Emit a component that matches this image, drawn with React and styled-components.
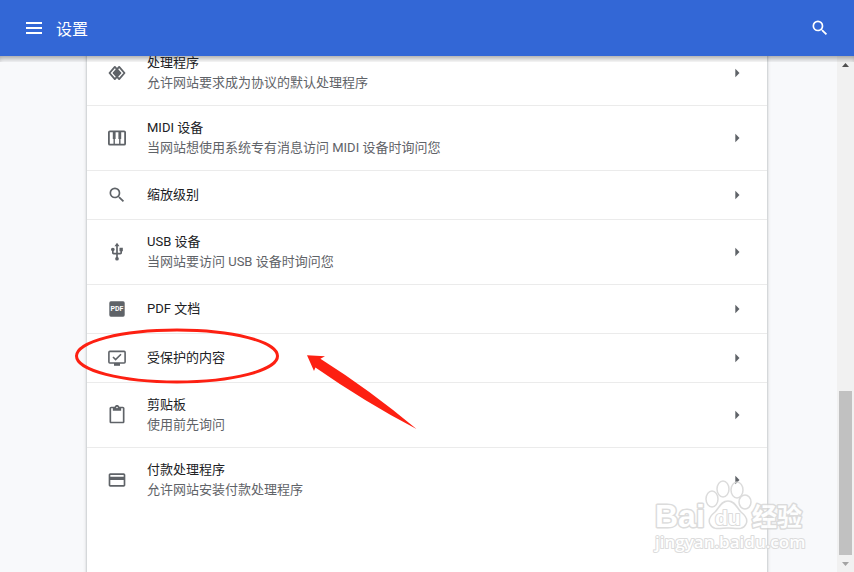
import React from 'react';
import styled, { createGlobalStyle } from 'styled-components';
import { MdSearch, MdUsb, MdContentPaste, MdCreditCard } from 'react-icons/md';

const HandlerIcon = () => (
  <svg width="20" height="20" viewBox="0 0 24 24" fill="none" stroke="currentColor" strokeWidth="2.2" strokeLinejoin="round" aria-hidden="true">
    <path d="M9.4 4.7L3 12l6.4 7.3 6.8-7.3z" />
    <path d="M14.6 4.7L7.8 12l6.8 7.3L21 12z" />
    <path d="M12 8.2L8.6 12l3.4 3.8 3.4-3.8z" fill="currentColor" />
  </svg>
);

const MidiIcon = () => (
  <svg width="20" height="20" viewBox="0 0 20 20" fill="none" stroke="currentColor" aria-hidden="true">
    <rect x="1.9" y="3.3" width="16.2" height="13.4" rx="1" strokeWidth="1.8" />
    <path d="M7.2 10v6M12.8 10v6" strokeWidth="1.4" />
    <path d="M7.2 3.5V11M12.8 3.5V11" strokeWidth="2.8" />
  </svg>
);

const PdfIcon = () => (
  <svg width="20" height="20" viewBox="0 0 20 20" aria-hidden="true">
    <rect x="2.3" y="2.3" width="15.4" height="15.4" rx="1.6" fill="currentColor" />
    <text x="10" y="12.4" textAnchor="middle" fontFamily="Roboto, sans-serif" fontSize="7" fontWeight="700" fill="#fff">PDF</text>
  </svg>
);

const ProtectedIcon = () => (
  <svg width="20" height="20" viewBox="0 0 20 20" fill="none" stroke="currentColor" aria-hidden="true">
    <rect x="1.9" y="3.4" width="16.2" height="11.6" rx="1" strokeWidth="1.6" />
    <path d="M7 15h6v2.8H7z" fill="currentColor" stroke="none" />
    <path d="M6 9l2.6 2.6L14 6.2" strokeWidth="1.6" />
  </svg>
);

const items = [
  { icon: <HandlerIcon />, title: '处理程序', detail: '允许网站要求成为协议的默认处理程序' },
  { icon: <MidiIcon />, title: 'MIDI 设备', detail: '当网站想使用系统专有消息访问 MIDI 设备时询问您' },
  { icon: <MdSearch size={20} />, title: '缩放级别' },
  { icon: <MdUsb size={20} />, title: 'USB 设备', detail: '当网站要访问 USB 设备时询问您' },
  { icon: <PdfIcon />, title: 'PDF 文档' },
  { icon: <ProtectedIcon />, title: '受保护的内容', marked: true },
  { icon: <MdContentPaste size={20} />, title: '剪贴板', detail: '使用前先询问' },
  { icon: <MdCreditCard size={20} />, title: '付款处理程序', detail: '允许网站安装付款处理程序' },
];

const Marker = () => (
  <MarkerSvg width="344" height="106" viewBox="0 0 344 106" aria-hidden="true">
    <ellipse cx="104" cy="28" rx="100.5" ry="26" fill="none" stroke="#fd2012" strokeWidth="3" />
    <path d="M234 27.3l18 1-4.6 2.4Q297 62 343.5 101Q292 74 242.4 39.4L241 43z" fill="#fd2012" />
  </MarkerSvg>
);

const Watermark = () => (
  <WatermarkSvg width="160" height="80" viewBox="0 0 160 80" aria-hidden="true">
    <g fill="#fff" stroke="#d6d6d6" strokeLinejoin="round" paintOrder="stroke" opacity="0.85">
      <text x="3" y="47" fontFamily="Liberation Sans, sans-serif" fontSize="32" fontWeight="700" strokeWidth="3">Bai</text>
      <g fillOpacity="0" strokeWidth="1.5">
        <ellipse cx="60" cy="19" rx="6" ry="8" />
        <ellipse cx="71" cy="9" rx="6" ry="8" />
        <ellipse cx="85" cy="10" rx="6" ry="8" />
        <ellipse cx="93" cy="22" rx="6" ry="7" />
        <path d="M76 21c7 0 9 7 13 11 5 4 7 8 5 12-3 7-11 4-18 4s-15 3-18-4c-2-4 0-8 5-12 4-4 6-11 13-11z" />
      </g>
      <text x="63" y="45" fontFamily="Liberation Sans, sans-serif" fontSize="21" fontWeight="700" strokeWidth="2">du</text>
      <text x="100" y="46" fontFamily="Noto Sans CJK SC, sans-serif" fontSize="25" fontWeight="700" strokeWidth="3">经验</text>
      <text x="3" y="68" fontFamily="Open Sans, sans-serif" fontSize="17" fontWeight="600" strokeWidth="2">jingyan.baidu.com</text>
    </g>
  </WatermarkSvg>
);

const App = () => {
  return (
    <>
      <GlobalStyle />
      <Page>
        <Header>
          <IconButton aria-label="主菜单">
            <svg width="20" height="20" viewBox="0 0 20 20" fill="currentColor" aria-hidden="true">
              <path d="M2 4h16v2H2zM2 9h16v2H2zM2 14h16v2H2z" />
            </svg>
          </IconButton>
          <Heading>设置</Heading>
          <IconButton aria-label="搜索设置">
            <MdSearch size={20} />
          </IconButton>
        </Header>
        <Main>
          <Card>
            {items.map((item) => (
              <Item key={item.title}>
                <Row $tall={Boolean(item.detail)}>
                  {item.icon}
                  <Label>
                    <Title>{item.title}</Title>
                    {item.detail && <Detail>{item.detail}</Detail>}
                  </Label>
                  <svg width="20" height="20" viewBox="0 0 24 24" fill="currentColor" aria-hidden="true">
                    <path d="M10 17l5-5-5-5z" />
                  </svg>
                </Row>
                {item.marked && <Marker />}
              </Item>
            ))}
          </Card>
          <Scrollbar>
            <ScrollButton>
              <svg width="7" height="4" viewBox="0 0 7 4" aria-hidden="true">
                <path d="M0 4L3.5 0 7 4z" fill="#505050" />
              </svg>
            </ScrollButton>
            <Thumb />
            <ScrollButton>
              <svg width="7" height="4" viewBox="0 0 7 4" aria-hidden="true">
                <path d="M0 0L3.5 4 7 0z" fill="#a3a3a3" />
              </svg>
            </ScrollButton>
          </Scrollbar>
          <Watermark />
        </Main>
      </Page>
    </>
  );
};

export default App;

const GlobalStyle = createGlobalStyle`
  * {
    box-sizing: border-box;
  }

  body {
    margin: 0;
    font-family: Roboto, 'Noto Sans CJK SC', sans-serif;
    font-size: 13px;
    line-height: 20px;
    color: #202124;
    background: #f8f9fa;
  }

  button {
    font: inherit;
    border: none;
    background: none;
    padding: 0;
    cursor: pointer;
  }

  svg {
    display: block;
    flex-shrink: 0;
  }
`;

const Page = styled.div`
  display: flex;
  flex-direction: column;
  height: 100vh;
`;

const Header = styled.header`
  display: flex;
  align-items: center;
  gap: 12px;
  flex-shrink: 0;
  height: 56px;
  padding: 0 24px;
  color: #fff;
  background: #3367d6;
`;

const IconButton = styled.button`
  color: #fff;
`;

const Heading = styled.h1`
  flex: 1;
  margin: 0;
  padding-top: 4px;
  font-size: 16px;
  font-weight: 400;
  line-height: 24px;
`;

const Main = styled.main`
  position: relative;
  flex: 1;
  min-height: 0;
  overflow: hidden;
  background: #f8f9fb;

  /* shadow the header drops on the scrolled content */
  &::after {
    content: '';
    position: absolute;
    top: 0;
    left: 0;
    right: 0;
    height: 6px;
    box-shadow: inset 0 5px 6px -3px rgba(0, 0, 0, 0.4);
  }
`;

const Card = styled.ul`
  list-style: none;
  width: 80%;
  max-width: 680px;
  min-height: 110%;
  margin: -16px auto 0;
  padding: 0;
  background: #fff;
  box-shadow: 0 1px 2px 0 rgba(60, 64, 67, 0.3), 0 1px 3px 1px rgba(60, 64, 67, 0.15);
`;

const Item = styled.li`
  position: relative;
  border-top: 1px solid #ebebeb;
`;

const Row = styled.button`
  display: flex;
  align-items: center;
  gap: 20px;
  width: 100%;
  height: ${({ $tall }) => ($tall ? '64px' : '48px')};
  padding: 0 20px;
  color: #5f6368;
  text-align: left;
`;

const Label = styled.span`
  display: flex;
  flex-direction: column;
  flex: 1;
`;

const Title = styled.span`
  color: #202124;
`;

const Detail = styled.span`
  color: #5f6368;
`;

const MarkerSvg = styled.svg`
  position: absolute;
  top: -6px;
  left: -14px;
  z-index: 1;
  pointer-events: none;
`;

const Scrollbar = styled.div`
  position: absolute;
  top: 0;
  right: 0;
  bottom: 0;
  display: flex;
  flex-direction: column;
  width: 17px;
  background: #f1f1f1;
`;

const ScrollButton = styled.div`
  display: flex;
  align-items: center;
  justify-content: center;
  height: 17px;
`;

const Thumb = styled.div`
  height: 164px;
  margin: auto 2px 0;
  background: #c1c1c1;
`;

const WatermarkSvg = styled.svg`
  position: absolute;
  right: 42px;
  bottom: 12px;
  pointer-events: none;
`;
